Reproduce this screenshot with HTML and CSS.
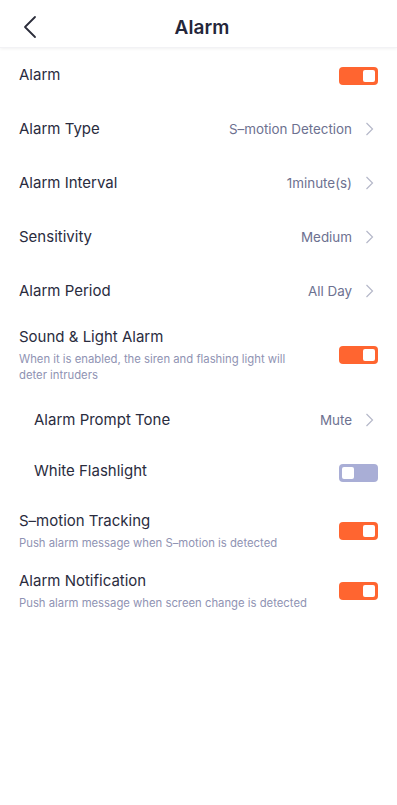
FILE: index.html
```html
<!DOCTYPE html>
<html>
<head>
<meta charset="utf-8">
<link rel="stylesheet" href="styles.css">
</head>
<body>
<div class="page">
  <header class="topbar">
    <svg class="back" width="24" height="24" viewBox="0 0 24 24"><path d="M16 2 L6 12 L16 22" fill="none" stroke="#2b2d3a" stroke-width="1.8" stroke-linecap="round" stroke-linejoin="round"/></svg>
    <h1 class="title">Alarm</h1>
  </header>

  <div class="row r54">
    <span class="label">Alarm</span>
    <span class="toggle on"><span class="knob"></span></span>
  </div>
  <div class="row r54">
    <span class="label">Alarm Type</span>
    <span class="value">S–motion Detection<svg class="chev" width="9" height="14" viewBox="0 0 9 14"><path d="M1.5 1 L7.5 7 L1.5 13" fill="none" stroke="#b5b8c9" stroke-width="1.2"/></svg></span>
  </div>
  <div class="row r54">
    <span class="label">Alarm Interval</span>
    <span class="value">1minute(s)<svg class="chev" width="9" height="14" viewBox="0 0 9 14"><path d="M1.5 1 L7.5 7 L1.5 13" fill="none" stroke="#b5b8c9" stroke-width="1.2"/></svg></span>
  </div>
  <div class="row r54">
    <span class="label">Sensitivity</span>
    <span class="value">Medium<svg class="chev" width="9" height="14" viewBox="0 0 9 14"><path d="M1.5 1 L7.5 7 L1.5 13" fill="none" stroke="#b5b8c9" stroke-width="1.2"/></svg></span>
  </div>
  <div class="row r54">
    <span class="label">Alarm Period</span>
    <span class="value">All Day<svg class="chev" width="9" height="14" viewBox="0 0 9 14"><path d="M1.5 1 L7.5 7 L1.5 13" fill="none" stroke="#b5b8c9" stroke-width="1.2"/></svg></span>
  </div>
  <div class="row sound">
    <div class="text">
      <div class="label">Sound &amp; Light Alarm</div>
      <div class="desc">When it is enabled, the siren and flashing light will deter intruders</div>
    </div>
    <span class="toggle on"><span class="knob"></span></span>
  </div>
  <div class="row sub r56">
    <span class="label">Alarm Prompt Tone</span>
    <span class="value">Mute<svg class="chev" width="9" height="14" viewBox="0 0 9 14"><path d="M1.5 1 L7.5 7 L1.5 13" fill="none" stroke="#b5b8c9" stroke-width="1.2"/></svg></span>
  </div>
  <div class="row sub r46">
    <span class="label">White Flashlight</span>
    <span class="toggle off"><span class="knob"></span></span>
  </div>
  <div class="row tracking">
    <div class="text">
      <div class="label">S–motion Tracking</div>
      <div class="desc">Push alarm message when S–motion is detected</div>
    </div>
    <span class="toggle on"><span class="knob"></span></span>
  </div>
  <div class="row notify">
    <div class="text">
      <div class="label">Alarm Notification</div>
      <div class="desc">Push alarm message when screen change is detected</div>
    </div>
    <span class="toggle on"><span class="knob"></span></span>
  </div>
</div>
</body>
</html>
```

FILE: styles.css
```css
* { box-sizing: border-box; }
html, body { margin: 0; padding: 0; background: #fff; }
body { font-family: Inter, "Noto Sans", sans-serif; color: #24263a; }
.page { width: 397px; min-height: 805px; background: #fff; }
.topbar {
  height: 48px;
  display: flex;
  align-items: center;
  justify-content: center;
  position: relative;
  box-shadow: 0 1px 3px rgba(0,0,0,0.06);
  border-bottom: 1px solid #f2f2f5;
}
.back { position: absolute; left: 19px; top: 15px; }
.title { margin: 0; font-size: 19px; font-weight: 600; color: #24263a; padding-left: 7px; padding-top: 7px; letter-spacing: 0.1px; }
.row {
  display: flex;
  align-items: center;
  justify-content: space-between;
  padding: 0 19px;
}
.r54 { height: 54px; }
.r56 { height: 56px; }
.r46 { height: 46px; }
.sub { padding-left: 34px; }
.sub .value, .r54 .value { padding-right: 4px; }
.label { font-size: 15px; line-height: 20px; color: #2a2c3e; }
.value { display: flex; align-items: center; font-size: 13.4px; color: #6d7190; }
.chev { margin-left: 13px; }
.text { display: flex; flex-direction: column; }
.desc { font-size: 11.3px; line-height: 16px; color: #8f93b3; margin-top: 4px; }
.sound { padding-top: 9px; padding-bottom: 9px; }
.sound .desc { max-width: 288px; }
.tracking { padding-top: 17px; padding-bottom: 12px; }
.notify { padding-top: 8px; padding-bottom: 8px; }
.toggle {
  flex: none;
  width: 39px;
  height: 18px;
  border-radius: 4px;
  display: flex;
  align-items: center;
  padding: 0 3px;
}
.toggle.on { background: #ff6530; justify-content: flex-end; }
.toggle.off { background: #a9aed6; justify-content: flex-start; }
.knob { width: 12px; height: 12px; background: #fff; border-radius: 2px; }
.r54 .toggle { margin-top: 2px; }
.r46 .toggle { margin-top: 4px; }
```
